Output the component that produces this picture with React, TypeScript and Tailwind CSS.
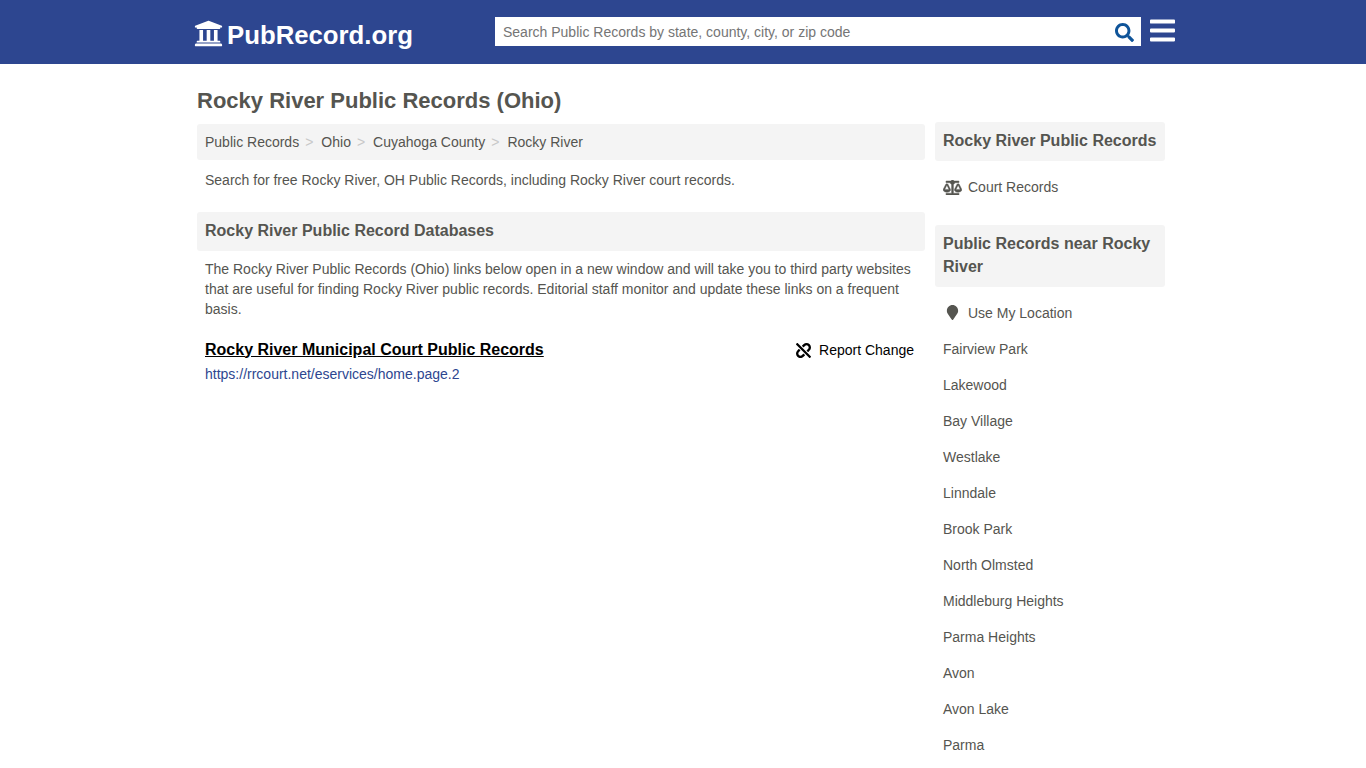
import { FaBalanceScale, FaBars, FaMapMarker, FaSearch, FaUniversity, FaUnlink } from 'react-icons/fa';

const CRUMBS = ['Public Records', 'Ohio', 'Cuyahoga County', 'Rocky River'];

const NEARBY = [
  'Fairview Park',
  'Lakewood',
  'Bay Village',
  'Westlake',
  'Linndale',
  'Brook Park',
  'North Olmsted',
  'Middleburg Heights',
  'Parma Heights',
  'Avon',
  'Avon Lake',
  'Parma',
];

export default function App() {
  return (
    <div className="h-[768px] overflow-hidden bg-white font-['Liberation_Sans',Arial,sans-serif] text-[14px] text-[#555550]">
      <header className="h-16 bg-[#2d4690]">
        <div className="mx-auto flex h-full w-[986px] translate-x-[3px] items-start pl-[2px]">
          <a className="mt-[18px] flex w-[300px] items-center text-white">
            <FaUniversity className="h-[29px] w-[29px] -translate-x-[1px] -translate-y-[2px]" />
            <span className="ml-[3px] text-[25.75px] leading-[34px] font-bold">PubRecord.org</span>
          </a>
          <div className="mt-[17px] flex h-[29px] w-[646px] items-center bg-white pt-[1px] pr-[7px] pl-2">
            <span className="flex-1 text-[14px] text-[#757575]">Search Public Records by state, county, city, or zip code</span>
            <FaSearch className="h-[19px] w-[19px] text-[#0f5499]" />
          </div>
          <FaBars className="mt-[16px] ml-[9px] h-[29px] w-[25px] text-white" />
        </div>
      </header>

      <main className="mx-auto w-[968px] translate-x-[-2px]">
        <h1 className="mt-[22px] text-[22px] leading-[30px] font-bold">Rocky River Public Records (Ohio)</h1>

        <div className="mt-[6px] flex gap-[10px]">
          <div className="mt-[2px] w-[728px]">
            <nav className="flex h-9 items-center rounded-[3px] bg-[#f4f4f4] px-2">
              {CRUMBS.map((crumb, i) => (
                <span key={crumb} className="flex items-center">
                  <span>{crumb}</span>
                  {i < CRUMBS.length - 1 && <span className="mr-[8px] ml-[6px] text-[#c8c8c8]">&gt;</span>}
                </span>
              ))}
            </nav>
            <p className="mt-[10px] px-2 leading-5">Search for free Rocky River, OH Public Records, including Rocky River court records.</p>

            <h2 className="mt-[22px] rounded-[3px] bg-[#f4f4f4] px-2 pt-[7px] pb-[9px] text-[16px] leading-[23px] font-bold">
              Rocky River Public Record Databases
            </h2>
            <p className="mt-2 px-2 leading-5">
              The Rocky River Public Records (Ohio) links below open in a new window and will take you to third party websites that are useful for finding Rocky River public records. Editorial staff monitor and update these links on a frequent basis.
            </p>

            <div className="mt-[20px] flex items-center justify-between pr-[11px] pl-2">
              <a className="text-[16px] leading-5 font-bold text-black underline">Rocky River Municipal Court Public Records</a>
              <span className="flex translate-y-[1px] items-center text-black">
                <FaUnlink className="mr-[8px] h-[15px] w-[15px]" />
                Report Change
              </span>
            </div>
            <a className="mt-[4px] block px-2 leading-5 text-[#2d4690]">https://rrcourt.net/eservices/home.page.2</a>
          </div>

          <aside className="w-[230px]">
            <h2 className="rounded-[3px] bg-[#f4f4f4] px-2 pt-[7px] pb-[9px] text-[16px] leading-[23px] font-bold">Rocky River Public Records</h2>
            <div className="mt-2 flex h-9 items-center px-2">
              <FaBalanceScale className="mr-[6px] h-[15px] w-[19px]" stroke="currentColor" strokeWidth={14} />
              Court Records
            </div>
            <h2 className="mt-[20px] rounded-[3px] bg-[#f4f4f4] px-2 pt-[7px] pb-[9px] text-[16px] leading-[23px] font-bold">Public Records near Rocky River</h2>
            <ul className="mt-2">
              <li className="flex h-9 items-center px-2">
                <FaMapMarker className="mr-[9px] ml-[3px] h-[15px] w-[13px] -translate-y-[1px]" />
                Use My Location
              </li>
              {NEARBY.map((city) => (
                <li key={city} className="flex h-9 items-center px-2">{city}</li>
              ))}
            </ul>
          </aside>
        </div>
      </main>
    </div>
  );
}
